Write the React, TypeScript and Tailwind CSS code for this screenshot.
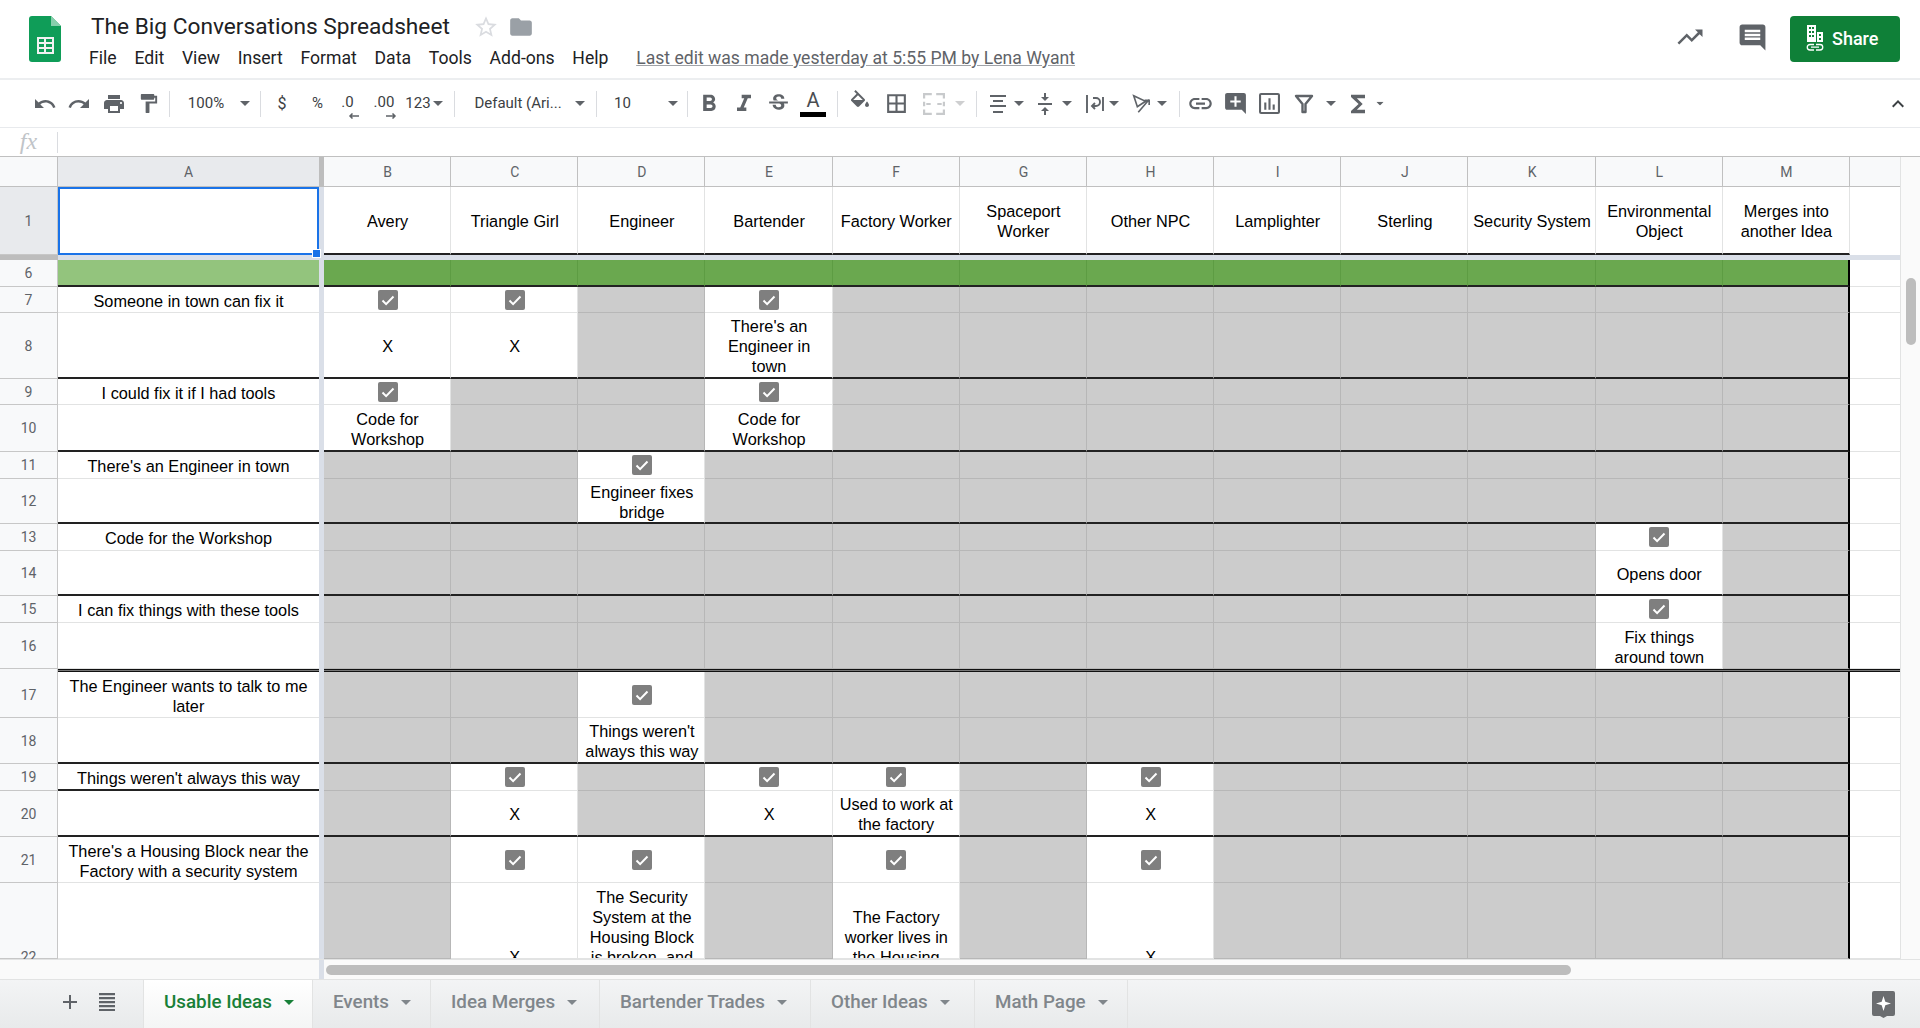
import type { ReactNode } from 'react'
import clsx from 'clsx'
import {
  MdAdd,
  MdAddComment,
  MdBorderAll,
  MdFolder,
  MdFormatBold,
  MdFormatItalic,
  MdFormatPaint,
  MdFunctions,
  MdInsertComment,
  MdKeyboardArrowUp,
  MdLink,
  MdPrint,
  MdRedo,
  MdStarBorder,
  MdStrikethroughS,
  MdTrendingUp,
  MdUndo,
} from 'react-icons/md'

const COLS = 'BCDEFGHIJKLM'.split('')

type Row = {
  n: number
  a?: string
  black?: boolean
  aBlack?: boolean
  cells: Record<string, string>
  pad?: Record<string, string>
}

const rows: Row[] = [
  { n: 7, a: 'Someone in town can fix it', cells: { B: 'c', C: 'c', E: 'c' } },
  { n: 8, black: true, aBlack: true, cells: { B: 'X', C: 'X', E: "There's an Engineer in town" } },
  { n: 9, a: 'I could fix it if I had tools', cells: { B: 'c', E: 'c' } },
  { n: 10, black: true, aBlack: true, cells: { B: 'Code for Workshop', E: 'Code for Workshop' } },
  { n: 11, a: "There's an Engineer in town", cells: { D: 'c' } },
  { n: 12, black: true, aBlack: true, cells: { D: 'Engineer fixes bridge' } },
  { n: 13, a: 'Code for the Workshop', cells: { L: 'c' } },
  { n: 14, black: true, aBlack: true, cells: { L: 'Opens door' } },
  { n: 15, a: 'I can fix things with these tools', cells: { L: 'c' } },
  { n: 16, cells: { L: 'Fix things around town' } },
  { n: 17, a: 'The Engineer wants to talk to me later', cells: { D: 'c' } },
  { n: 18, black: true, aBlack: true, cells: { D: "Things weren't always this way" } },
  { n: 19, a: "Things weren't always this way", aBlack: true, cells: { C: 'c', E: 'c', F: 'c', H: 'c' } },
  { n: 20, black: true, aBlack: true, cells: { C: 'X', E: 'X', F: 'Used to work at the factory', H: 'X' } },
  { n: 21, a: "There's a Housing Block near the Factory with a security system", cells: { C: 'c', D: 'c', F: 'c', H: 'c' } },
  {
    n: 22,
    cells: {
      C: 'X',
      D: 'The Security System at the Housing Block is broken, and',
      F: 'The Factory worker lives in the Housing',
      H: 'X',
    },
    pad: { C: 'pt-[64px]', D: 'pt-[4px]', F: 'pt-[24px]', H: 'pt-[64px]' },
  },
]

const headings = [
  'Avery',
  'Triangle Girl',
  'Engineer',
  'Bartender',
  'Factory Worker',
  'Spaceport Worker',
  'Other NPC',
  'Lamplighter',
  'Sterling',
  'Security System',
  'Environmental Object',
  'Merges into another Idea',
]

const tabs = [
  { name: 'Events', cls: 'w-[118px]' },
  { name: 'Idea Merges', cls: 'w-[169px]' },
  { name: 'Bartender Trades', cls: 'w-[211px]' },
  { name: 'Other Ideas', cls: 'w-[164px]' },
  { name: 'Math Page', cls: 'w-[153px]' },
]

function Caret({ className = '' }: { className?: string }) {
  return (
    <svg viewBox="0 0 10 5" className={clsx('h-[5px] w-[10px] shrink-0', className)} fill="#5f6368">
      <path d="M0 0h10L5 5z" />
    </svg>
  )
}

function Sep({ className }: { className: string }) {
  return <div className={clsx('h-[26px] w-px shrink-0 bg-[#dadce0]', className)} />
}

function Tool({ className, children }: { className: string; children: ReactNode }) {
  return <div className={clsx('flex shrink-0 items-center justify-center', className)}>{children}</div>
}

function Check() {
  return (
    <svg viewBox="0 0 20 20" className="h-[20px] w-[20px]">
      <rect width="20" height="20" rx="2" fill="#7f7f7f" />
      <path d="M4.5 10.5l3.6 3.6 7.4-7.6" fill="none" stroke="#fff" strokeWidth="2" />
    </svg>
  )
}

function SheetsLogo() {
  return (
    <svg viewBox="0 0 32 46" className="h-[46px] w-[32px] shrink-0">
      <path d="M3 0h19l10 10v33a3 3 0 0 1-3 3H3a3 3 0 0 1-3-3V3a3 3 0 0 1 3-3z" fill="#0f9d58" />
      <path d="M22 0l10 10H22z" fill="#87ceac" />
      <path d="M8 21h17v17H8zm2 2v3h5v-3zm7 0v3h6v-3zm-7 5v3h5v-3zm7 0v3h6v-3zm-7 5v3h5v-3zm7 0v3h6v-3z" fill="#f1f1f1" fillRule="evenodd" />
    </svg>
  )
}

function Toolbar() {
  const icon = '#5f6368'
  return (
    <div className="flex h-[48px] items-center border-b border-[#e8eaed] pl-[27px] font-['Roboto',sans-serif] text-[15px] text-[#3c4043]">
      <Tool className="w-[35px]"><MdUndo size={24} color={icon} /></Tool>
      <Tool className="w-[34px]"><MdRedo size={24} color={icon} /></Tool>
      <Tool className="w-[35px]"><MdPrint size={24} color={icon} /></Tool>
      <Tool className="w-[34px]"><MdFormatPaint size={23} color={icon} /></Tool>
      <Sep className="ml-[4px]" />
      <Tool className="ml-[18px] w-[36px]">100%</Tool>
      <Caret className="ml-[16px]" />
      <Sep className="ml-[10px]" />
      <Tool className="ml-[3px] w-[36px] text-[16px]">$</Tool>
      <Tool className="w-[35px]">%</Tool>
      <Tool className="w-[25px]">
        <span className="relative -mt-[3px]">
          .0
          <svg viewBox="0 0 12 6" className="absolute -bottom-[6px] left-[7px] h-[6px] w-[12px]" fill="none" stroke={icon} strokeWidth="1.5">
            <path d="M11 3H2M4.500 .5L2 3l2.500 2.500" />
          </svg>
        </span>
      </Tool>
      <Tool className="ml-[8px] w-[32px]">
        <span className="relative -mt-[3px]">
          .00
          <svg viewBox="0 0 12 6" className="absolute -bottom-[6px] left-[11px] h-[6px] w-[12px]" fill="none" stroke={icon} strokeWidth="1.5">
            <path d="M1 3h9M7.500 .5L10 3 7.500 5.500" />
          </svg>
        </span>
      </Tool>
      <Tool className="ml-[5px] w-[26px]">123</Tool>
      <Caret className="ml-[2px]" />
      <Sep className="ml-[11px]" />
      <Tool className="ml-[20px] w-[86px] whitespace-nowrap">Default (Ari...</Tool>
      <Caret className="ml-[14px]" />
      <Sep className="ml-[11px]" />
      <Tool className="ml-[17px] w-[17px]">10</Tool>
      <Caret className="ml-[37px]" />
      <Sep className="ml-[9px]" />
      <Tool className="ml-[4px] w-[34px]"><MdFormatBold size={28} color={icon} /></Tool>
      <Tool className="w-[36px]"><MdFormatItalic size={28} color={icon} /></Tool>
      <Tool className="w-[32px]"><MdStrikethroughS size={25} color={icon} /></Tool>
      <Tool className="w-[38px] flex-col">
        <span className="text-[20px] leading-[20px] text-[#4a4d51]">A</span>
        <span className="mt-[2px] h-[5px] w-[26px] bg-black" />
      </Tool>
      <Sep className="ml-[5px]" />
      <Tool className="ml-[5px] w-[34px]">
        <svg viewBox="0 0 24 24" className="-mt-[3px] h-[24px] w-[24px]" fill={icon}>
          <path d="M16.560 8.940L7.620 0 6.210 1.410l2.380 2.380-5.150 5.150c-.59.590-.59 1.540 0 2.120l5.500 5.500c.29.290.68.440 1.060.440s.77-.15 1.060-.44l5.500-5.500c.59-.58.59-1.530 0-2.120zM5.210 10L10 5.210 14.790 10H5.210zM19 11.500s-2 2.170-2 3.500c0 1.100.9 2 2 2s2-.9 2-2c0-1.330-2-3.500-2-3.500z" />
        </svg>
      </Tool>
      <Tool className="ml-[2px] w-[34px]"><MdBorderAll size={25} color={icon} /></Tool>
      <Tool className="ml-[4px] w-[34px]">
        <svg viewBox="0 0 20 20" className="h-[22px] w-[22px]" fill="none" stroke="#c8cacc" strokeWidth="2">
          <path d="M1 5V1h7M12 1h7v4M1 15v4h7M12 19h7v-4M1 8v4M19 8v4M3 10h4M17 10h-4" />
        </svg>
      </Tool>
      <Caret className="ml-[4px] opacity-30" />
      <Sep className="ml-[11px]" />
      <Tool className="ml-[8px] w-[26px]">
        <svg viewBox="0 0 18 20" className="h-[20px] w-[18px]" fill={icon}>
          <path d="M1 1h16v2H1zM4 6h10v2H4zM1 11h16v2H1zM4 17h10v2H4z" />
        </svg>
      </Tool>
      <Caret className="ml-[3px]" />
      <Tool className="ml-[8px] w-[26px]">
        <svg viewBox="0 0 18 24" className="h-[24px] w-[18px]" fill={icon}>
          <path d="M2 11h14v2H2zM8 1h2v4h3l-4 4-4-4h3zM9 15l4 4h-3v4H8v-4H5z" />
        </svg>
      </Tool>
      <Caret className="ml-[4px]" />
      <Tool className="ml-[10px] w-[26px]">
        <svg viewBox="0 0 20 24" className="h-[24px] w-[20px]" fill="none" stroke={icon} strokeWidth="1.900">
          <path d="M2 3v18M18 5v14M8 6h3a4 4 0 0 1 0 8H7M10 11l-3 3 3 3" />
        </svg>
      </Tool>
      <Caret className="ml-[1px]" />
      <Tool className="ml-[9px] w-[26px]">
        <svg viewBox="0 0 22 24" className="h-[22px] w-[20px]" fill="none" stroke={icon} strokeWidth="1.800">
          <path d="M3 3l13 6-9 6zM8 21L20 7M15 8h5v5" />
        </svg>
      </Tool>
      <Caret className="ml-[3px]" />
      <Sep className="ml-[12px]" />
      <Tool className="ml-[6px] w-[28px]"><MdLink size={27} color={icon} /></Tool>
      <Tool className="ml-[7px] w-[28px]"><MdAddComment size={25} color={icon} /></Tool>
      <Tool className="ml-[6px] w-[28px]">
        <svg viewBox="0 0 20 20" className="h-[21px] w-[21px]" fill={icon}>
          <path fillRule="evenodd" d="M2 0h16a2 2 0 0 1 2 2v16a2 2 0 0 1-2 2H2a2 2 0 0 1-2-2V2a2 2 0 0 1 2-2zm0 2v16h16V2zM5 9h2v7H5zM9 5h2v11H9zM13 11h2v5h-2z" />
        </svg>
      </Tool>
      <Tool className="ml-[7px] w-[28px]">
        <svg viewBox="0 0 20 20" className="h-[20px] w-[20px]" fill="none" stroke={icon} strokeWidth="2.400">
          <path d="M2 2h16l-6.500 8v8h-3v-8z" strokeLinejoin="round" />
        </svg>
      </Tool>
      <Caret className="ml-[8px]" />
      <Tool className="ml-[8px] w-[28px]"><MdFunctions size={30} color={icon} /></Tool>
      <Caret className="ml-[3px] scale-75" />
      <Tool className="ml-auto mr-[10px] w-[24px]"><MdKeyboardArrowUp size={26} color="#3c4043" /></Tool>
    </div>
  )
}

function Cell({ v, black, last, pad }: { v?: string; black?: boolean; last?: boolean; pad?: string }) {
  return (
    <div
      className={clsx(
        'flex justify-center overflow-hidden border-r border-b pr-[3px] pl-[4px] text-center',
        pad ? 'items-start' : 'items-center',
        pad,
        !pad && v && v !== 'c' && 'pt-[2px]',
        v ? 'border-[#e2e3e3] bg-white' : 'border-[#b7b7b7] bg-[#cccccc]',
        black && 'border-b-2 border-b-[#222222]',
        last && 'border-r-2 border-r-black',
      )}
    >
      {v === 'c' ? <Check /> : v}
    </div>
  )
}

function RowNum({ n, top, selected }: { n: number; top?: boolean; selected?: boolean }) {
  return (
    <div
      className={clsx(
        'flex justify-center border-r border-b border-[#c7c7c7] font-["Roboto",sans-serif] text-[14px] text-[#5f6368]',
        top ? 'items-start pt-[64px]' : 'items-center',
        selected ? 'bg-[#e8eaed]' : 'bg-[#f8f9fa]',
      )}
    >
      {n}
    </div>
  )
}

const freeze = <div className="bg-[#dadfe8]" />
const rest = <div className="border-b border-[#e2e3e3] bg-white" />

function SheetGrid() {
  return (
    <div className="h-[802px] w-[1900px] overflow-hidden">
      <div className="grid w-[1900px] grid-cols-[58px_261px_5px_repeat(12,1fr)_50px] grid-rows-[30px_68px_5px_27px_26px_66px_26px_47px_27px_45px_27px_45px_27px_46px_3px_46px_46px_27px_46px_46px_76px] font-['Liberation_Sans',Arial,sans-serif] text-[16.3px] leading-[20px] text-black">
        <div className="border-r border-b border-[#c0c0c0] bg-[#f8f9fa]" />
        <div className="flex items-center justify-center border-b border-[#c0c0c0] bg-[#e8eaed] font-['Roboto',sans-serif] text-[14px] text-[#5f6368]">A</div>
        <div className="bg-[#bdbdbd]" />
        {COLS.map((c) => (
          <div key={c} className="flex items-center justify-center border-r border-b border-[#c0c0c0] bg-[#f8f9fa] pl-[1px] font-['Roboto',sans-serif] text-[14px] text-[#5f6368]">{c}</div>
        ))}
        <div className="border-b border-[#c0c0c0] bg-[#f8f9fa]" />

        <RowNum n={1} selected />
        <div className="relative border-2 border-[#1a73e8] bg-white">
          <div className="absolute -right-[4px] -bottom-[5px] z-10 h-[9px] w-[9px] border border-white bg-[#1a73e8]" />
        </div>
        {freeze}
        {headings.map((h) => (
          <div key={h} className="flex items-center justify-center border-r border-b-2 border-[#e2e3e3] border-b-[#222222] bg-white pt-[2px] pr-[2px] pl-[3px] text-center">{h}</div>
        ))}
        <div className="bg-white" />

        <div className="bg-[#bdbdbd]" />
        <div className="col-span-14 bg-[#dadfe8]" />
        <div className="bg-[#dadfe8]" />

        <RowNum n={6} />
        <div className="border-b-2 border-[#222222] bg-[#93c47d]" />
        {freeze}
        {COLS.map((c) => (
          <div key={c} className={clsx('border-b-2 border-b-[#222222] bg-[#6aa84f]', c === 'M' ? 'border-r-2 border-r-black' : 'border-r border-r-[#5d9c43]')} />
        ))}
        {rest}

        {rows.map((r) => (
          <Rows key={r.n} row={r} />
        ))}
      </div>
    </div>
  )
}

function Rows({ row }: { row: Row }) {
  return (
    <>
      <RowNum n={row.n} top={row.n === 22} />
      <div className={clsx('flex items-center justify-center border-b bg-white px-[3px] pt-[2px] text-center', row.aBlack ? 'border-b-2 border-[#222222]' : 'border-[#e2e3e3]')}>{row.a}</div>
      {freeze}
      {COLS.map((c) => (
        <Cell key={c} v={row.cells[c]} black={row.black} last={c === 'M'} pad={row.pad?.[c]} />
      ))}
      {rest}
      {row.n === 16 && (
        <>
          <div className="border-r border-[#c7c7c7] bg-[#f8f9fa]" />
          <div className="border-y border-[#111111] bg-[#777777]" />
          {freeze}
          <div className="col-span-13 border-y border-[#111111] bg-[#777777]" />
        </>
      )}
    </>
  )
}

export default function App() {
  return (
    <div className="flex h-[1028px] w-[1920px] flex-col overflow-hidden bg-white font-['Roboto',sans-serif]">
      <header className="flex h-[80px] shrink-0 border-b-2 border-[#eceef0]">
        <div className="ml-[29px] pt-[16px]"><SheetsLogo /></div>
        <div className="ml-[28px] flex flex-col">
          <div className="mt-[11px] flex h-[32px] items-center">
            <span className="ml-[2px] text-[22.7px] leading-[32px] text-[#202124]">The Big Conversations Spreadsheet</span>
            <MdStarBorder size={26} color="#dadce0" className="ml-[23px]" />
            <MdFolder size={26} color="#9aa0a6" className="ml-[9px]" />
          </div>
          <nav className="mt-[4px] flex items-center gap-[17.75px] text-[17.6px] leading-[22px] text-[#202124]">
            <span>File</span>
            <span>Edit</span>
            <span>View</span>
            <span>Insert</span>
            <span>Format</span>
            <span>Data</span>
            <span>Tools</span>
            <span>Add-ons</span>
            <span>Help</span>
            <span className="ml-[10px] text-[#5f6368] underline decoration-[#a0a3a8]">Last edit was made yesterday at 5:55 PM by Lena Wyant</span>
          </nav>
        </div>
        <div className="ml-auto flex items-start pt-[16px]">
          <MdTrendingUp size={30} color="#5f6368" className="mt-[6px]" />
          <MdInsertComment size={31} color="#5f6368" className="ml-[32px] mt-[6px]" />
          <button className="ml-[22px] mr-[20px] flex h-[46px] w-[110px] items-center rounded-[4px] bg-[#0f8038] pb-[2px] pl-[16px] text-[18px] font-medium text-white">
            <svg viewBox="0 0 18 26" className="h-[26px] w-[18px]" fill="none" stroke="#fff">
              <path fill="#fff" stroke="none" fillRule="evenodd" d="M1 0h9v17H1zm2 2v2h2V2zm3 0v2h2V2zM3 6v2h2V6zm3 0v2h2V6zm-3 4v2h2v-2zm3 0v2h2v-2zm5-3h6v10h-6zm2 2v2h2V9zm0 4v2h2v-2z" />
              <path strokeWidth="1.300" d="M8 19.500H4a2.700 2.700 0 0 0 0 5.500h4M10 19.500h4a2.700 2.700 0 0 1 0 5.500h-4M5 22.200h8" />
            </svg>
            <span className="ml-[8px]">Share</span>
          </button>
        </div>
      </header>

      <Toolbar />

      <div className="flex h-[29px] shrink-0 items-center border-b border-[#c0c0c0]">
        <div className="-mt-[3px] flex w-[57px] items-center justify-center font-['Liberation_Serif',serif] text-[24px] italic leading-none text-[#c0c4c8]">fx</div>
        <div className="h-[21px] w-px bg-[#dadce0]" />
      </div>

      <div className="flex h-[802px] shrink-0">
        <SheetGrid />
        <div className="flex-1 border-l border-[#e2e3e3] bg-[#fafafa] pt-[121px] pl-[5px]">
          <div className="h-[67px] w-[10px] rounded-full bg-[#bdbdbd]" />
        </div>
      </div>

      <div className="flex h-[20px] shrink-0 border-t border-[#e2e3e3] bg-[#fafafa]">
        <div className="w-[319px]" />
        <div className="w-[5px] bg-[#dadfe8]" />
        <div className="pl-[2px] pt-[5px]">
          <div className="h-[10px] w-[1245px] rounded-full bg-[#bdbdbd]" />
        </div>
      </div>

      <footer className="flex h-[49px] shrink-0 items-center border-t border-[#e2e3e3] bg-gradient-to-b from-[#f3f4f5] to-[#e8eaeb] text-[18.8px] font-medium text-[#80868b]">
        <MdAdd size={24} color="#5f6368" className="-mt-[4px] ml-[58px]" />
        <svg viewBox="0 0 16 18" className="-mt-[4px] ml-[17px] h-[18px] w-[16px]" fill="#5f6368">
          <path d="M0 0h16v2.200H0zM0 4h16v2.200H0zM0 8h16v2.200H0zM0 12h16v2.200H0zM0 16h16v2H0z" />
        </svg>
        <div className="ml-[28px] flex h-full w-[170px] items-center gap-[12px] border-x border-[#e2e3e3] bg-gradient-to-b from-white to-[#f4f5f5] pb-[4px] pl-[20px] text-[#188038]">
          Usable Ideas
          <Caret className="[&>path]:fill-[#188038]" />
        </div>
        {tabs.map((t) => (
          <div key={t.name} className={clsx('flex h-full items-center gap-[12px] border-r border-[#e2e3e3] pb-[4px] pl-[20px]', t.cls)}>
            {t.name}
            <Caret className="[&>path]:fill-[#80868b]" />
          </div>
        ))}
        <svg viewBox="0 0 23 27" className="ml-auto mr-[25px] h-[27px] w-[23px]">
          <path d="M2 0h19a2 2 0 0 1 2 2v21a2 2 0 0 1-2 2h-6l-3.500 2L8 25H2a2 2 0 0 1-2-2V2a2 2 0 0 1 2-2z" fill="#6b6d70" />
          <path d="M11.500 5l1.800 5.700 5.700 1.800-5.700 1.800-1.800 5.700-1.800-5.700L4 12.500l5.700-1.800z" fill="#fff" />
        </svg>
      </footer>
    </div>
  )
}
